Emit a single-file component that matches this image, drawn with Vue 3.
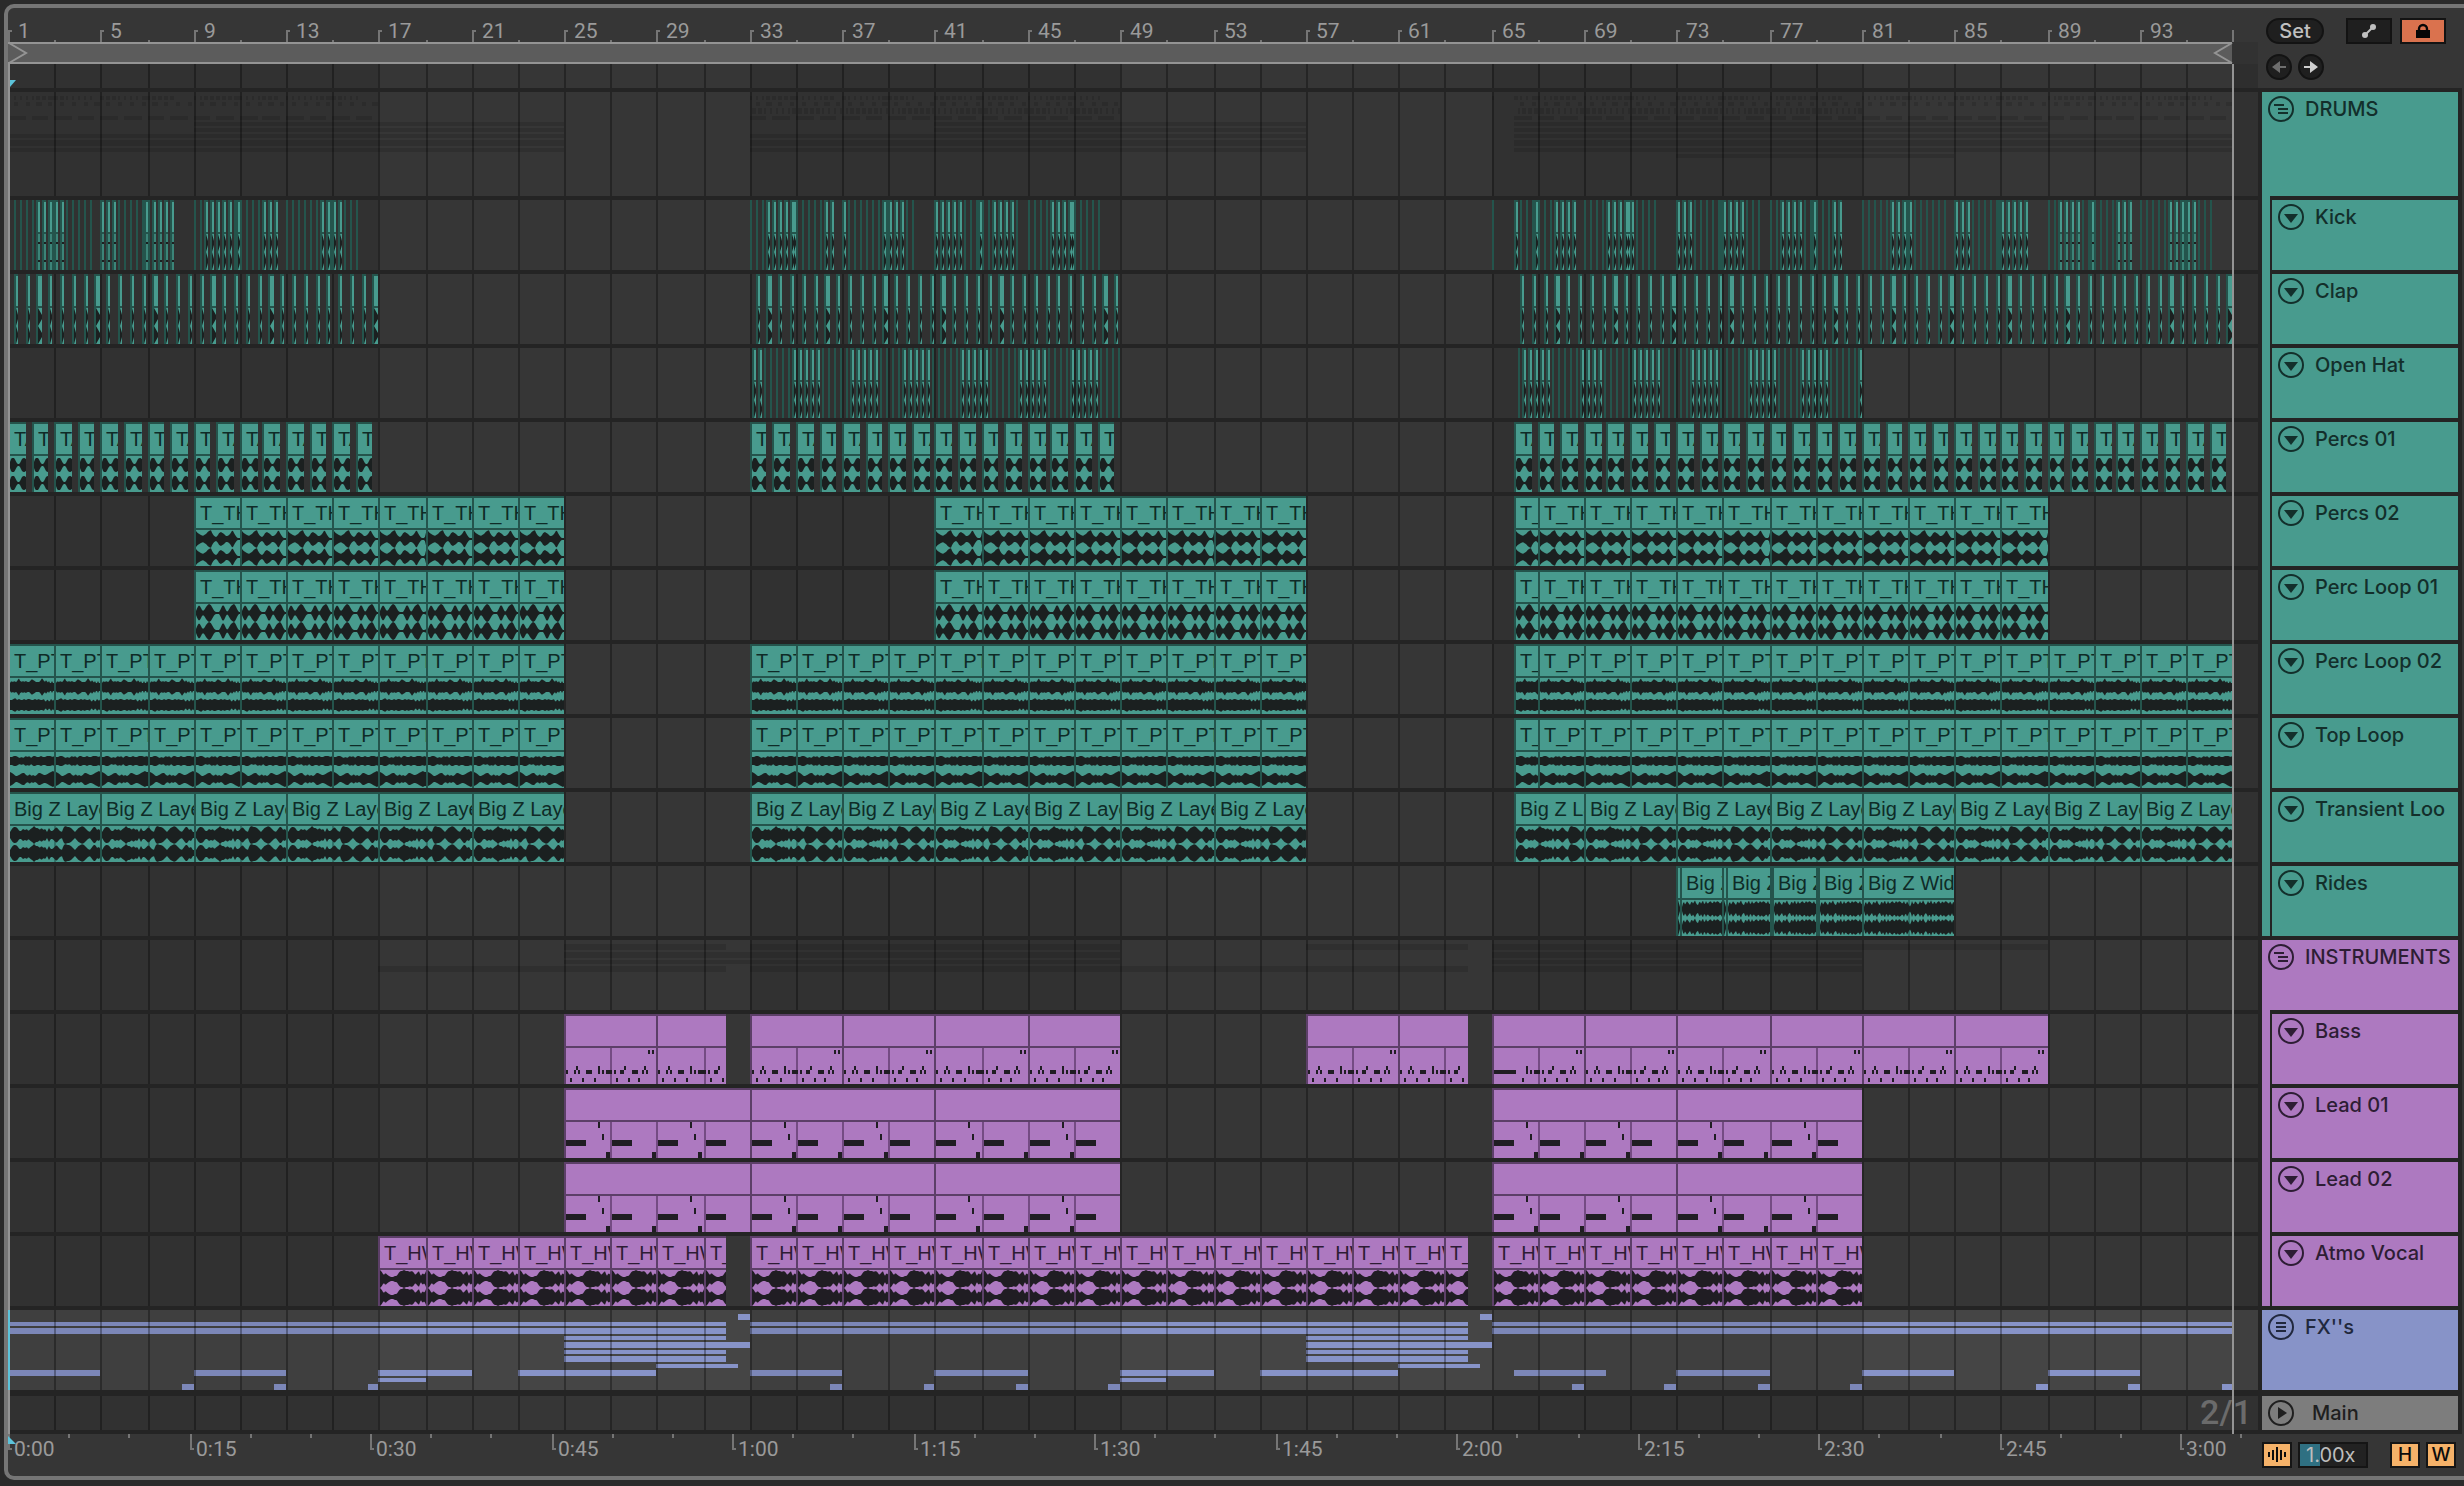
<script setup>
import { computed, onBeforeUnmount, onMounted, ref } from 'vue'

const SONG_BARS = 95.97
const BARS_PER_SECOND = 125 / 240
const TAIL = 26

const lanes = ref(null)
const laneWidth = ref(2250)
let observer

onMounted(() => {
  const measure = () => { laneWidth.value = lanes.value.clientWidth }
  measure()
  observer = new ResizeObserver(measure)
  observer.observe(lanes.value)
})
onBeforeUnmount(() => observer.disconnect())

const songWidth = computed(() => laneWidth.value - TAIL)
const unit = computed(() => songWidth.value / SONG_BARS)
const snap = (bar) => 2 * Math.round(((bar - 1) * unit.value) / 2)

/* ---------- clip data, positions in bars ---------- */

const every = (from, to, step, length, label) => {
  const out = []
  for (let b = from; b < to - 0.001; b += step) out.push({ s: b, e: Math.min(b + length, to), label })
  return out
}

const kickClips = () => {
  const out = []
  const sections = [[1, 17], [33, 49], [65, 97]]
  for (const [from, to] of sections) {
    for (let k = 0; k < (to - from) * 4; k++) {
      const inEight = k % 32
      const bar = from + k / 4
      if (inEight === 15 || inEight > 28) continue
      if (k === 0 && from === 1) continue
      if (from === 65 && k > 0 && k < 4) continue
      const soft = bar < 9 || bar >= 89
      out.push({ s: bar, e: bar + 0.125, soft })
      if (inEight === 7 || inEight === 23) out.push({ s: bar + 0.11, e: bar + 0.25, soft })
    }
  }
  return out
}

const hatClips = () => [
  ...every(33.12, 49.05, 0.25, 0.13),
  ...every(66.12, 81.05, 0.25, 0.13),
]

const rideClips = [
  { s: 73, e: 73.12 }, { s: 73.12, e: 75, label: 'Big Z Wide' },
  { s: 75, e: 75.12 }, { s: 75.12, e: 77, label: 'Big Z Wide' },
  { s: 77, e: 77.12 }, { s: 77.12, e: 79, label: 'Big Z Wide' },
  { s: 79, e: 79.12 }, { s: 79.12, e: 81, label: 'Big Z Wide' },
  { s: 81, e: 85, label: 'Big Z Wide' },
]

const twoBar = (label, ...ranges) => ranges.flatMap(([a, b]) => every(a, b, 2, 2, label))
const shortStart = (label) => [{ s: 66, e: 67, label }]

const envelopes = {
  percs01: { period: 0.8, a: [3, 7, 7, 7, 5, 2, 1, 1, 3, 6, 7, 7, 6, 4] },
  percs02: { period: 2, a: [8, 6, 5, 4, 3, 4, 5, 7, 8, 9, 5, 3, 2, 3, 6, 7, 6, 5, 3, 3, 4, 6, 9, 6, 3, 1, 1, 1] },
  loop01: { period: 2, a: [2, 6, 8, 5, 2, 3, 6, 8, 9, 8, 5, 2, 1, 1, 1, 4, 8, 7, 3, 1, 4, 7, 8, 9, 7, 3, 1, 1] },
  loop02: { period: 2, a: [4, 6, 5, 6, 5, 6, 9, 6, 5, 6, 5, 6, 5, 5, 6, 8, 7, 6, 5, 5, 5, 6, 9, 7, 5, 7, 4, 6, 3, 6, 3, 6], b: [5, 5, 6, 7, 5, 6, 5, 5, 6, 5, 6, 6, 5, 5, 6, 5, 6, 5, 5, 6, 3, 6, 3, 6, 4, 6] },
  top: { period: 2, a: [4, 4, 5, 5, 4, 3, 4, 3, 5, 4, 5, 3, 5, 5, 4, 4, 5, 4, 4, 5, 5, 5, 4, 5], b: [7, 6, 5, 3, 3, 4, 5, 6, 6, 4, 3, 5, 3, 4, 3, 4, 6, 6, 5, 4, 4, 5, 6, 7, 8, 7] },
  transient: { period: 4, a: [3, 6, 8, 8, 7, 4, 4, 6, 5, 6, 4, 6, 7, 9, 7, 7, 5, 7, 5, 6, 3, 7, 4, 4, 6, 8, 6, 4, 3, 8, 9, 8, 8, 7, 5, 3, 5, 7, 8, 9, 8, 6, 4, 3, 5, 8, 8, 5, 6, 3] },
  rides: { period: 2, a: [2, 8, 4, 8, 6, 4, 8, 5, 9, 5, 4, 8, 5, 9, 4, 8, 5, 7, 8, 5, 8, 6, 8, 7, 5, 8, 4, 8, 4] },
  atmo: { period: 2, a: [9, 7, 4, 6, 4, 3, 2, 2, 3, 3, 6, 8, 8, 9, 8, 8, 7, 8, 7, 4, 6, 8, 3, 6, 4] },
}

const tracks = [
  { name: 'DRUMS', kind: 'group', tone: 'teal', height: 104, shadowOf: 'drums' },
  { name: 'Kick', group: 'drums', clips: kickClips(), wave: 'thin' },
  { name: 'Clap', group: 'drums', wave: 'thin', clips: [...every(1.25, 17, 0.5, 0.1875), ...every(33.25, 49, 0.5, 0.1875), ...every(66.25, 97, 0.5, 0.1875)] },
  { name: 'Open Hat', group: 'drums', clips: hatClips(), wave: 'thin' },
  { name: 'Percs 01', group: 'drums', wave: 'percs01', clips: [...every(1, 17, 1, 0.75, 'TA'), ...every(33, 49, 1, 0.75, 'TA'), ...every(66, 97, 1, 0.75, 'TA')] },
  { name: 'Percs 02', group: 'drums', wave: 'percs02', clips: [...twoBar('T_TH', [9, 25], [41, 57], [67, 89]), ...shortStart('T_TH')] },
  { name: 'Perc Loop 01', group: 'drums', wave: 'loop01', clips: [...twoBar('T_TH', [9, 25], [41, 57], [67, 89]), ...shortStart('T_TH')] },
  { name: 'Perc Loop 02', group: 'drums', wave: 'loop02', clips: [...twoBar('T_PT', [1, 25], [33, 57], [67, 97]), ...shortStart('T_PT')] },
  { name: 'Top Loop', group: 'drums', wave: 'top', clips: [...twoBar('T_PT', [1, 25], [33, 57], [67, 97]), ...shortStart('T_PT')] },
  { name: 'Transient Loo', group: 'drums', wave: 'transient', divided: true, clips: [...every(1, 25, 4, 4, 'Big Z Layer'), ...every(33, 57, 4, 4, 'Big Z Layer'), { s: 66, e: 69, label: 'Big Z Layer' }, ...every(69, 97, 4, 4, 'Big Z Layer')] },
  { name: 'Rides', group: 'drums', wave: 'rides', divided: true, clips: rideClips },
  { name: 'INSTRUMENTS', kind: 'group', tone: 'purple', height: 70, shadowOf: 'instruments' },
  { name: 'Bass', group: 'instruments', wave: 'bass', divided: true, clips: [...every(25, 32, 4, 4), ...every(33, 49, 4, 4), ...every(57, 64, 4, 4), ...every(65, 89, 4, 4)] },
  { name: 'Lead 01', group: 'instruments', wave: 'lead', divided: true, clips: [...every(25, 49, 8, 8), ...every(65, 81, 8, 8)] },
  { name: 'Lead 02', group: 'instruments', wave: 'lead', divided: true, clips: [...every(25, 49, 8, 8), ...every(65, 81, 8, 8)] },
  { name: 'Atmo Vocal', group: 'instruments', wave: 'atmo', clips: twoBar('T_HW', [17, 32], [33, 64], [65, 81]) },
  { name: "FX''s", kind: 'fx', tone: 'blue', height: 80 },
  { name: 'Main', kind: 'main', tone: 'grey', height: 34 },
].map((t) => ({
  kind: 'track', height: 70, clips: [],
  tone: t.group === 'drums' ? 'teal' : 'purple',
  ...t,
}))

/* overview strips: y, height for each child of a group */
const strips = {
  drums: [[4, 4], [10, 4], [16, 6], [24, 4], [30, 4], [36, 4], [42, 4], [48, 6], [56, 4], [62, 4]],
  instruments: [[4, 6], [12, 6], [20, 4], [26, 6]],
}

const fxStrips = [
  [4, 6, [[32.5, 33], [64.5, 65]]],
  [12, 4, [[1, 32], [33, 64], [65, 97]]],
  [18, 6, [[1, 32], [33, 64], [65, 97]]],
  [26, 4, [[25, 32], [57, 64]]],
  [32, 6, [[25, 33], [57, 65]]],
  [40, 4, [[25, 32], [57, 64]]],
  [46, 6, [[25, 32], [57, 64]]],
  [54, 4, [[29, 32.5], [61, 64.5]]],
  [60, 6, [[1, 5], [9, 13], [17, 21], [23, 29], [33, 37], [41, 45], [49, 53], [55, 61], [66, 70], [73, 77], [81, 85], [89, 93]]],
  [68, 4, [[17, 19], [49, 51]]],
  [74, 6, [[8.5, 9], [12.5, 13], [16.5, 17], [36.5, 37], [40.5, 41], [44.5, 45], [48.5, 49], [68.5, 69], [72.5, 73], [76.5, 77], [80.5, 81], [88.5, 89], [92.5, 93], [96.5, 97]]],
]

/* ---------- drawing ---------- */

const box = (x, y, w, h) => `M${x} ${y}h${w}v${h}h${-w}z`

const bands = computed(() => {
  let d = ''
  for (let b = 1; b < 97; b += 32) d += box(snap(b), 0, snap(b + 16) - snap(b), 200)
  return d + box(songWidth.value, 0, TAIL, 200)
})

const grid = computed(() => {
  let d = ''
  for (let b = 3; b < 97; b += 2) d += box(snap(b), 0, 2, 200)
  return d
})

const sample = (list, t) => {
  const p = t * list.length
  const i = Math.floor(p) % list.length
  const next = list[(i + 1) % list.length]
  return list[i] + (next - list[i]) * (p - Math.floor(p))
}

const wavePath = (env, x0, x1) => {
  let d = ''
  const channels = [[43, env.a], [61, env.b || env.a]]
  for (const [mid, list] of channels) {
    const up = []
    const down = []
    for (let x = x0 + 2; x <= x1; x++) {
      const t = (((x - x0 - 2) / unit.value) % env.period) / env.period
      const v = Math.round(sample(list, t) * 10) / 10
      up.push(`${x} ${mid - v}`)
      down.unshift(`${x} ${mid + v}`)
    }
    d += `M${up.join('L')}L${down.join('L')}z`
  }
  return d
}

const thinWave = (clip, x0, x1) => {
  let d = ''
  for (const mid of [43, 61]) {
    d += clip.soft
      ? box(x0 + 2, mid - 1, x1 - x0 - 2, 2)
      : `M${x0 + 2} ${mid - 9}L${x1} ${mid - 2}V${mid + 2}L${x0 + 2} ${mid + 9}z`
  }
  return d
}

/* notes: x offset, y, width; two alternating two-bar cells */
const bassCells = [
  [[2, 56, 2], [10, 56, 2], [12, 52, 2], [14, 56, 2], [22, 56, 6], [34, 52, 2], [34, 56, 2], [38, 56, 2], [42, 56, 6], [6, 64, 2], [18, 64, 2], [30, 64, 2]],
  [[0, 56, 2], [4, 56, 2], [10, 56, 4], [14, 52, 2], [22, 56, 6], [34, 52, 2], [32, 56, 2], [36, 56, 2], [6, 64, 2], [18, 64, 2], [28, 64, 2], [38, 36, 2], [42, 36, 2]],
]

const notePath = (track, clip) => {
  let d = ''
  let cell = 0
  const end = track.wave === 'lead' && clip.s === 25 ? 32 : clip.e
  for (let b = clip.s; b < end; b += 2, cell++) {
    const x = snap(b)
    const limit = snap(clip.e)
    if (track.wave === 'bass') {
      for (const [dx, y, w] of bassCells[cell % 2]) {
        if (b === 65 && dx < 24 && cell === 0) continue
        if (x + dx + w <= limit) d += box(x + dx, y, w, 4)
      }
      if (b === 65) d += box(x + 2, 56, 22, 4)
      continue
    }
    d += box(x + 2, 52, 20, 6)
    if (cell % 2 === 0) d += box(x + 34, 34, 2, 6) + box(x + 38, 46, 2, 6)
    if (cell < 3) d += box(x + 42, 64, 4, 6)
  }
  return d
}

const drawn = computed(() => tracks.map((track) => {
  const art = { track, edge: '', body: '', softBody: '', wave: '', divide: '', under: '', labels: [] }
  if (track.shadowOf) {
    const children = tracks.filter((t) => t.group === track.shadowOf)
    children.forEach((child, i) => {
      const [y, h] = strips[track.shadowOf][i]
      for (const c of child.clips) art.under += box(snap(c.s), y, snap(c.e) - snap(c.s), h)
    })
  }
  if (track.kind === 'fx') {
    for (const [y, h, spans] of fxStrips) {
      for (const [s, e] of spans) art.under += box(snap(s), y, snap(e) - snap(s), h)
    }
  }
  for (const clip of track.clips) {
    const x0 = snap(clip.s)
    const x1 = Math.min(snap(clip.e), songWidth.value)
    art.edge += box(x0, 0, x1 - x0, 70)
    if (x1 - x0 <= 2) continue
    art.body += box(x0 + 2, 2, x1 - x0 - 2, 30)
    if (clip.soft) art.softBody += box(x0 + 2, 34, x1 - x0 - 2, 36)
    else art.body += box(x0 + 2, 34, x1 - x0 - 2, 36)
    if (track.divided) {
      for (let b = Math.floor(clip.s / 2) * 2 + 1; b < clip.e; b += 2) {
        if (b > clip.s) art.divide += box(snap(b), 34, 2, 36)
      }
    }
    if (track.wave === 'thin' || x1 - x0 < 6) art.wave += thinWave(clip, x0, x1)
    else if (track.wave === 'bass' || track.wave === 'lead') art.wave += notePath(track, clip)
    else art.wave += wavePath(envelopes[track.wave], x0, x1)
    if (clip.label) art.labels.push({ x: x0 + 6, w: x1 - x0 - 6, text: clip.label })
  }
  return art
}))

/* ---------- rulers ---------- */

const barMarks = computed(() => {
  const out = []
  for (let b = 1; b < 97; b += 4) out.push({ x: snap(b), text: b })
  return out
})
const barTicks = computed(() => {
  let d = box(songWidth.value, 22, 2, 12)
  for (let b = 1; b < 97; b += 2) {
    d += (b - 1) % 4 ? box(snap(b), 32, 2, 2) : box(snap(b), 22, 2, 12) + box(snap(b) + 2, 22, 2, 2)
  }
  return d
})

const secondX = (s) => snap(1 + s * BARS_PER_SECOND)
const timeMarks = computed(() => {
  const out = []
  for (let s = 0; s <= 180; s += 15) {
    out.push({ x: secondX(s), text: `${Math.floor(s / 60)}:${String(s % 60).padStart(2, '0')}` })
  }
  return out
})
const timeTicks = computed(() => {
  let d = ''
  for (let s = 0; s <= 185; s += 5) {
    const x = secondX(s)
    d += s % 15 ? box(x, 0, 2, 4) : box(x, 0, 2, 16) + box(x + 2, 14, 2, 2)
  }
  return d
})
</script>

<template>
  <main class="arrangement">
    <header class="row top">
      <svg class="ruler" :width="laneWidth" height="80">
        <g class="marks">
          <path :d="barTicks" />
          <text v-for="m in barMarks" :key="m.text" :x="m.x + 10" y="30">{{ m.text }}</text>
        </g>
        <rect class="ruler-tail" :x="songWidth" y="34" width="28" height="46" />
        <g transform="translate(0 56)" class="marker-lane">
          <svg :width="laneWidth" height="24">
            <path class="bands" :d="bands" />
            <path class="grid" :d="grid" />
          </svg>
        </g>
        <rect class="loop-fill" x="0" y="34" :width="songWidth" height="22" />
        <rect class="loop-line" x="0" y="34" :width="songWidth" height="2" />
        <rect class="loop-line" x="0" y="54" :width="songWidth" height="2" />
        <path class="loop-end" d="M1 35L18 45L1 55" />
        <path class="loop-end" :d="`M${songWidth} 35L${songWidth - 17} 45L${songWidth} 55`" />
        <path class="insert" d="M2 72h6l-6 7z" />
      </svg>
      <div class="controls">
        <div class="line">
          <button class="pill" type="button">Set</button>
          <button class="tool automation" type="button" aria-label="Automation">
            <svg width="42" height="22" viewBox="2 2 42 22">
              <path d="M19 17L27 9" stroke="#c0c0c0" stroke-width="2" />
              <circle cx="19" cy="17" r="3" fill="#c0c0c0" />
              <circle cx="27" cy="9" r="3" fill="#c0c0c0" />
            </svg>
          </button>
          <button class="tool lock" type="button" aria-label="Lock">
            <svg width="42" height="22" viewBox="2 2 42 22">
              <path d="M19 13V11a4 4 0 0 1 8 0v2" fill="none" stroke="#060606" stroke-width="2.4" />
              <path d="M16 12h14v8h-14z" fill="#060606" />
            </svg>
          </button>
        </div>
        <div class="line arrows">
          <button class="round" type="button" aria-label="Previous locator">
            <svg width="22" height="22" viewBox="2 2 22 22"><path d="M6 13l8-6v5h6v2h-6v5z" fill="#6e6e6e" /></svg>
          </button>
          <button class="round" type="button" aria-label="Next locator">
            <svg width="22" height="22" viewBox="2 2 22 22"><path d="M20 13l-8-6v5h-6v2h6v5z" fill="#cfcfcf" /></svg>
          </button>
        </div>
      </div>
    </header>

    <section class="tracks">
      <div v-for="(art, i) in drawn" :key="art.track.name" class="row" :class="art.track.kind">
        <div :ref="(el) => { if (i === 0) lanes = el }" class="lane">
          <svg class="lane-art" :class="art.track.tone" :width="laneWidth" :height="art.track.height">
            <path class="under" :d="art.under" />
            <path class="bands" :d="bands" />
            <path class="grid" :d="grid" />
            <path class="edge" :d="art.edge" />
            <path class="body" :d="art.body" />
            <path class="soft-body" :d="art.softBody" />
            <path class="divide" :d="art.divide" />
            <path class="wave" :d="art.wave" />
            <text v-if="art.track.kind === 'main'" class="zoom-level" :x="songWidth + 20" y="28">2/1</text>
          </svg>
          <span
            v-for="l in art.labels"
            :key="l.x"
            class="clip-name"
            :class="art.track.tone"
            :style="{ left: l.x + 'px', width: l.w + 'px' }"
          >{{ l.text }}</span>
          <span v-if="art.track.kind === 'fx'" class="cursor"></span>
        </div>
        <div class="head" :class="[art.track.tone, { child: art.track.kind === 'track' }]">
          <button class="title" type="button">
            <svg class="fold" width="26" height="26" viewBox="0 0 26 26">
              <circle cx="13" cy="13" r="12" fill="none" stroke="currentColor" stroke-width="2" />
              <path v-if="art.track.kind === 'group'" d="M6 9h10M10 13h10M10 17h10" stroke="currentColor" stroke-width="2" />
              <path v-else-if="art.track.kind === 'fx'" d="M8 9h10M8 13h10M8 17h10" stroke="currentColor" stroke-width="2" />
              <path v-else-if="art.track.kind === 'main'" d="M10 7l9 6l-9 6z" fill="currentColor" />
              <path v-else d="M6 10h14l-7 9z" fill="currentColor" />
            </svg>
            <span>{{ art.track.name }}</span>
          </button>
        </div>
      </div>
      <i class="edge-line"></i>
      <i class="edge-line" :style="{ left: songWidth + 'px' }"></i>
    </section>

    <footer class="row bottom">
      <svg class="ruler" :width="laneWidth" height="42">
        <g class="marks">
          <path :d="timeTicks" />
          <path class="insert" d="M0 2l8 8h-8z" />
          <text v-for="m in timeMarks" :key="m.text" :x="m.x + 6" y="22">{{ m.text }}</text>
        </g>
      </svg>
      <div class="status">
        <button class="toggle" type="button" aria-label="Overview">
          <svg width="26" height="22" viewBox="0 0 26 22">
            <path d="M5 8v5M9 6v10M13 3v15M17 6v10M21 8v5" stroke="#0c0c0c" stroke-width="2" />
          </svg>
        </button>
        <input class="speed" type="text" value="1.00x" aria-label="Zoom factor">
        <button class="toggle first" type="button">H</button>
        <button class="toggle" type="button">W</button>
      </div>
    </footer>
  </main>
</template>

<style>
body {
  margin: 0;
  background: #2a2a2a;
  overflow: hidden;
}
</style>

<style scoped>
.arrangement {
  margin: 4px 0 6px 4px;
  border: 4px solid #757575;
  border-right: 0;
  border-radius: 10px 0 0 10px;
  padding-right: 2px;
  background: #363636;
  overflow: hidden;
  font-family: "Inter", "Liberation Sans", sans-serif;
}

.row {
  display: grid;
  grid-template-columns: minmax(0, 1fr) 196px;
  column-gap: 4px;
  padding-right: 4px;
}

svg {
  display: block;
}

button {
  margin: 0;
  padding: 0;
  border: 0;
  background: none;
  font: inherit;
  color: inherit;
}

/* rulers */
.marks path {
  fill: #757575;
}

.marks text {
  font: 21px "Roboto", "Liberation Sans", sans-serif;
  fill: #9a9a9a;
}

.ruler-tail {
  fill: #323232;
}

.bands {
  fill: rgba(0, 0, 0, 0.08);
}

.grid {
  fill: rgba(0, 0, 0, 0.31);
}

.loop-fill {
  fill: #5c5c5c;
}

.loop-line {
  fill: #949494;
}

.loop-end {
  fill: none;
  stroke: #949494;
  stroke-width: 2;
}

.insert,
.marks path.insert {
  fill: #5cc3da;
}

/* top right controls */
.controls {
  padding: 10px 0 0 4px;
}

.line {
  display: flex;
}

.arrows {
  gap: 6px;
  margin-top: 10px;
}

.pill,
.round,
.tool {
  box-sizing: border-box;
  height: 26px;
  border: 2px solid #131313;
  background: #1f1f1f;
  color: #c0c0c0;
}

.pill {
  width: 58px;
  border-radius: 13px;
  font-size: 20px;
  font-weight: 500;
  line-height: 22px;
}

.round {
  width: 26px;
  border-radius: 13px;
}

.tool {
  width: 46px;
}

.automation {
  margin-left: 22px;
}

.lock {
  margin-left: 8px;
  background: #da724e;
}

/* tracks */
.tracks {
  position: relative;
  display: flex;
  flex-direction: column;
  gap: 4px;
  padding: 4px 0;
  background: #242424;
}

.row.main {
  margin-top: 2px;
}

.lane {
  position: relative;
  background: #363636;
}

.fx .lane {
  background: #454545;
}

.under {
  fill: rgba(0, 0, 0, 0.13);
}

.blue .under {
  fill: #8793c8;
}

.teal .edge {
  fill: #24544c;
}

.teal .body {
  fill: #489b8e;
}

.soft-body {
  fill: #3c8478;
}

.teal .divide {
  fill: rgba(20, 60, 54, 0.4);
}

.teal .wave {
  fill: #1b2020;
}

.purple .edge {
  fill: #5c3f68;
}

.purple .body {
  fill: #ad79c0;
}

.purple .divide {
  fill: rgba(60, 30, 70, 0.5);
}

.purple .wave {
  fill: #201d23;
}

.zoom-level {
  font-family: "Roboto", "Liberation Sans", sans-serif;
  font-size: 34px;
  font-weight: 500;
  text-anchor: end;
  fill: #6b6b6b;
}

.clip-name {
  position: absolute;
  top: 2px;
  height: 30px;
  overflow: hidden;
  font: 20px/30px "Liberation Sans", sans-serif;
  white-space: nowrap;
}

.clip-name.teal {
  color: #0f2b27;
}

.clip-name.purple {
  color: #2d1c34;
}

.cursor {
  position: absolute;
  z-index: 2;
  inset: 0 auto 0 0;
  width: 2px;
  background: #5cc3da;
}

.edge-line {
  position: absolute;
  top: -24px;
  bottom: 0;
  left: 0;
  width: 2px;
  background: #949494;
}

.head {
  position: relative;
}

.head.teal {
  background: #489b8e;
  color: #132f2b;
}

.head.purple {
  background: #ad79c0;
  color: #2d1d34;
}

.head.blue {
  background: #8793c8;
  color: #21283d;
}

.head.grey {
  background: #7d7d7d;
  color: #1f1f1f;
}

.head.child {
  margin-left: 10px;
}

.head.child::before {
  content: "";
  position: absolute;
  top: -4px;
  bottom: 0;
  left: -10px;
  width: 8px;
  background: inherit;
}

.title {
  display: flex;
  gap: 11px;
  padding: 4px 0 0 6px;
  font-size: 20px;
  font-weight: 500;
  line-height: 26px;
  white-space: nowrap;
}

.main .title {
  gap: 18px;
}

/* bottom bar */
.status {
  display: flex;
  align-items: flex-start;
  gap: 6px;
  padding-top: 8px;
}

.toggle {
  box-sizing: border-box;
  width: 30px;
  height: 26px;
  border: 2px solid #151515;
  background: #f5b269;
  color: #0c0c0c;
  font-size: 19px;
  font-weight: 500;
  line-height: 22px;
}

.toggle.first {
  margin-left: 16px;
}

.speed {
  box-sizing: border-box;
  width: 70px;
  height: 26px;
  margin: 0;
  padding: 0 0 0 6px;
  border: 2px solid #151515;
  background: linear-gradient(to right, #2f7082 20px, #222 20px);
  color: #bdbdbd;
  font: 20px "Inter", sans-serif;
}
</style>
